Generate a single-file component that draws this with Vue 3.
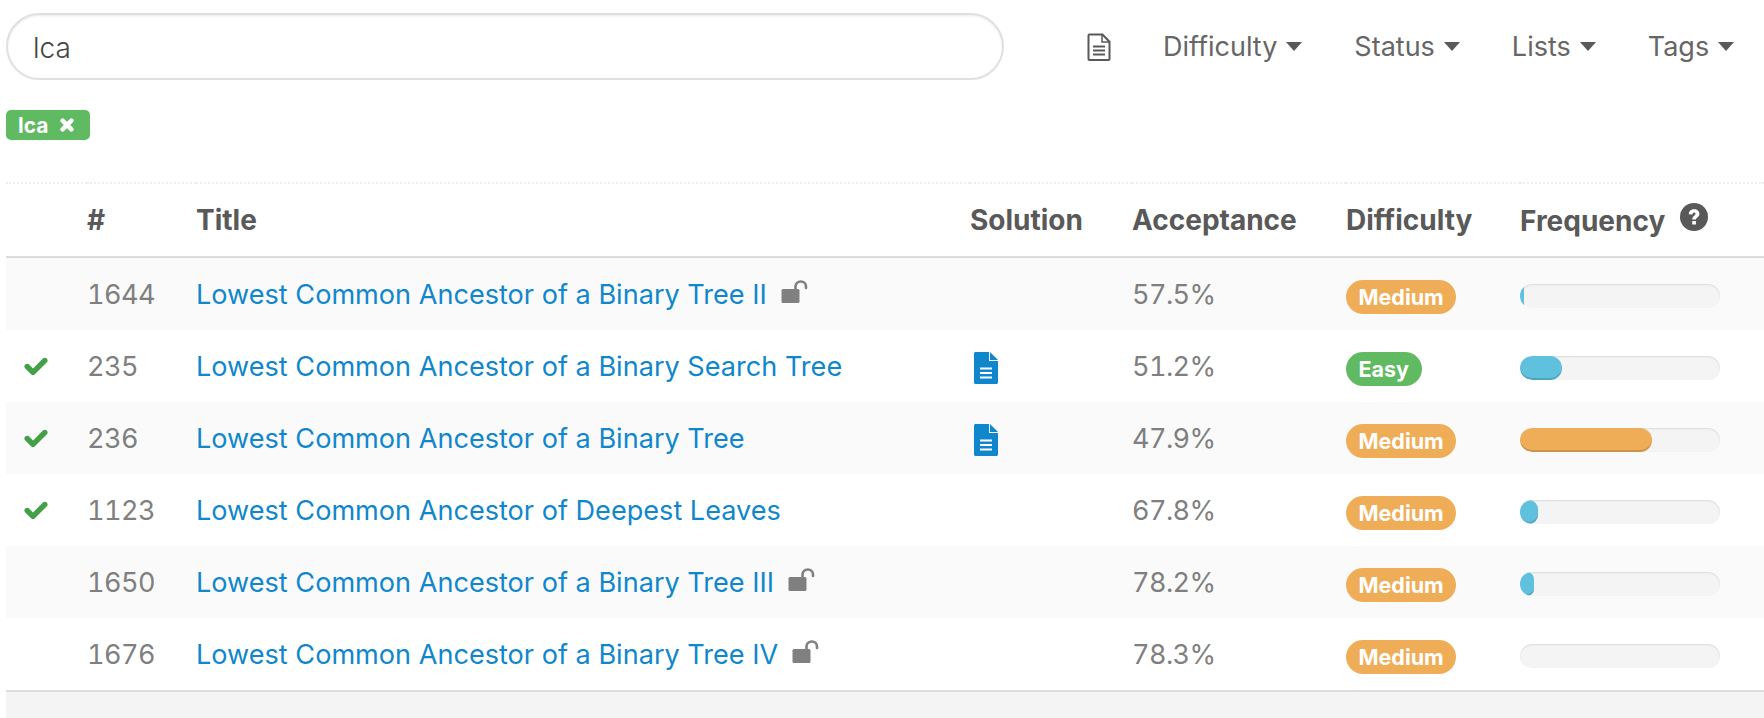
<template>
  <div class="page">
    <div class="toolbar">
      <div class="search">lca</div>
      <div class="filters">
        <svg class="doc-outline" viewBox="0 0 24 28" width="24" height="28">
          <path d="M1.500 2.500c0-.6.4-1 1-1h13l7 7.200v17.300c0 .6-.4 1-1 1h-19c-.6 0-1-.4-1-1z" fill="none" stroke="#595959" stroke-width="2" />
          <path d="M15 1.500v7.500h7.500" fill="none" stroke="#595959" stroke-width="1.500" />
          <path d="M6 13.500h12M6 17.500h12M6 21.500h12" stroke="#595959" stroke-width="2" />
        </svg>
        <div v-for="f in filters" :key="f" class="filter">
          <span>{{ f }}</span>
          <i class="caret"></i>
        </div>
      </div>
    </div>

    <div class="tags">
      <span class="tag">lca
        <svg viewBox="0 0 14 14" width="14" height="14">
          <path d="M2.600 2.600l8.800 8.800M11.400 2.600l-8.800 8.800" stroke="#fff" stroke-width="4.400" stroke-linecap="round" />
        </svg>
      </span>
    </div>

    <table class="questions">
      <thead>
        <tr>
          <th class="col-status"></th>
          <th class="col-id">#</th>
          <th class="col-title">Title</th>
          <th class="col-solution">Solution</th>
          <th class="col-acceptance">Acceptance</th>
          <th class="col-difficulty">Difficulty</th>
          <th class="col-frequency">
            Frequency
            <svg class="help" viewBox="0 0 28 28" width="28" height="28">
              <circle cx="14" cy="14" r="14" fill="#595959" />
              <path d="M8.800 11.200C8.800 8 11.200 6.200 14.200 6.200c2.900 0 5.200 1.800 5.200 4.500 0 3.600-3.400 3.500-3.400 5.800h-3.800c0-3.800 3.300-3.800 3.300-5.600 0-.8-.6-1.300-1.400-1.300-1 0-1.500.7-1.500 1.800z" fill="#fff" />
              <rect x="12.200" y="18" width="3.800" height="3.600" rx=".6" fill="#fff" />
            </svg>
          </th>
        </tr>
      </thead>
      <tbody>
        <tr v-for="q in questions" :key="q.id">
          <td class="col-status">
            <svg v-if="q.solved" viewBox="0 0 24 20" width="24" height="20">
              <path d="M3.200 10.500l5.800 5.800L20.800 4.500" fill="none" stroke="#43a047" stroke-width="5.400" stroke-linejoin="round" stroke-linecap="round" />
            </svg>
          </td>
          <td class="col-id num">{{ q.id }}</td>
          <td class="col-title">
            <a class="link">{{ q.title }}</a>
            <svg v-if="q.locked" class="lock" viewBox="0 0 27 23" width="27" height="23">
              <rect x="0.500" y="9" width="18" height="14" rx="1.500" fill="#808080" />
              <path d="M14.500 9V6.500C14.500 3.500 16.800 1.500 19.800 1.500S25 3.500 25 6.500v1.500" fill="none" stroke="#808080" stroke-width="2.600" stroke-linecap="round" />
            </svg>
          </td>
          <td class="col-solution">
            <svg v-if="q.solution" viewBox="0 0 24 32" width="24" height="32">
              <path d="M1.500 0H15v9h9v21.500c0 .8-.7 1.500-1.500 1.500h-21C.7 32 0 31.300 0 30.500v-29C0 .7.700 0 1.500 0z" fill="#1087cc" />
              <path d="M16 0l8 8h-8z" fill="#1087cc" />
              <path d="M6 15.500h12v2H6zM6 20h12v2H6zM6 24.500h12v2H6z" fill="#fff" />
            </svg>
          </td>
          <td class="col-acceptance num">{{ q.acceptance }}</td>
          <td class="col-difficulty">
            <span class="badge" :class="q.difficulty.toLowerCase()">{{ q.difficulty }}</span>
          </td>
          <td class="col-frequency">
            <div class="bar">
              <div class="fill" :class="q.barClass" :style="{ width: q.frequency + 'px' }"></div>
            </div>
          </td>
        </tr>
      </tbody>
    </table>
    <div class="footer"></div>
  </div>
</template>

<script setup>
const filters = ['Difficulty', 'Status', 'Lists', 'Tags']

const questions = [
  { id: 1644, title: 'Lowest Common Ancestor of a Binary Tree II', locked: true, acceptance: '57.5%', difficulty: 'Medium', frequency: 4, barClass: 'blue' },
  { id: 235, solved: true, title: 'Lowest Common Ancestor of a Binary Search Tree', solution: true, acceptance: '51.2%', difficulty: 'Easy', frequency: 42, barClass: 'blue' },
  { id: 236, solved: true, title: 'Lowest Common Ancestor of a Binary Tree', solution: true, acceptance: '47.9%', difficulty: 'Medium', frequency: 132, barClass: 'orange' },
  { id: 1123, solved: true, title: 'Lowest Common Ancestor of Deepest Leaves', acceptance: '67.8%', difficulty: 'Medium', frequency: 18, barClass: 'blue' },
  { id: 1650, title: 'Lowest Common Ancestor of a Binary Tree III', locked: true, acceptance: '78.2%', difficulty: 'Medium', frequency: 14, barClass: 'blue' },
  { id: 1676, title: 'Lowest Common Ancestor of a Binary Tree IV', locked: true, acceptance: '78.3%', difficulty: 'Medium', frequency: 0, barClass: 'blue' }
]
</script>

<style>
html, body {
  margin: 0;
  background: #fff;
}
</style>

<style scoped>
.page {
  padding: 13px 0 0 6px;
  font-family: Inter, "Liberation Sans", sans-serif;
  height: 705px;
  overflow: hidden;
}

.toolbar {
  display: flex;
  align-items: center;
}

.search {
  box-sizing: border-box;
  width: 998px;
  height: 67px;
  padding-left: 25px;
  border: 2px solid #e0e0e0;
  border-radius: 34px;
  box-shadow: inset 0 1px 2px rgba(0, 0, 0, 0.08);
  font-size: 28px;
  font-weight: 300;
  line-height: 66px;
  color: #444;
}

.filters {
  display: flex;
  align-items: center;
  margin-left: 83px;
  color: #666;
  font-size: 27px;
}

.doc-outline {
  margin-right: 52px;
}

.filter {
  display: flex;
  align-items: center;
  margin-right: 52px;
}

.filter:last-child {
  margin-right: 0;
}

.caret {
  margin-left: 9px;
  border-top: 9px solid #595959;
  border-left: 8px solid transparent;
  border-right: 8px solid transparent;
}

.tags {
  margin-top: 30px;
  height: 72px;
}

.tag {
  display: inline-flex;
  align-items: center;
  gap: 12px;
  box-sizing: border-box;
  height: 30px;
  width: 84px;
  padding-left: 12px;
  background: #60ba62;
  border-radius: 5px;
  color: #fff;
  font-size: 21px;
  font-weight: 700;
}

.questions {
  width: 1758px;
  border-collapse: collapse;
  table-layout: fixed;
  border-top: 2px dotted #eee;
  border-bottom: 2px solid #ddd;
}

th {
  height: 72px;
  padding: 0;
  text-align: left;
  font-size: 28px;
  font-weight: 700;
  color: #595959;
  border-bottom: 2px solid #ddd;
}

td {
  height: 72px;
  padding: 0;
  font-size: 27.1px;
  color: #7f7f7f;
}

.num {
  font-variant-numeric: tabular-nums;
  letter-spacing: -0.6px;
}

tbody tr:nth-child(odd) {
  background: #fafafa;
}

.col-status {
  width: 81px;
  padding-left: 18px;
  box-sizing: border-box;
}

.col-status svg {
  display: block;
}

.col-id {
  width: 109px;
}

.col-title {
  width: 774px;
}

.col-solution {
  width: 162px;
}

.col-solution svg {
  display: block;
  margin-top: 4px;
  margin-left: 4px;
}

.col-acceptance {
  width: 214px;
}

.col-difficulty {
  width: 174px;
}

.link {
  color: #1087cc;
}

.lock {
  margin-left: 14px;
  vertical-align: 1px;
}

.help {
  margin-left: 8px;
  vertical-align: 0;
}

.badge {
  display: inline-block;
  height: 34px;
  margin-top: 6px;
  padding: 0 12.500px;
  border-radius: 17px;
  color: #fff;
  font-size: 21.5px;
  font-weight: 700;
  line-height: 34px;
  vertical-align: middle;
}

.badge.medium {
  background: #f0ad58;
}

.badge.easy {
  background: #60ba62;
}

.bar {
  width: 200px;
  height: 24px;
  margin-top: 4px;
  background: #f4f4f4;
  border-radius: 12px;
  overflow: hidden;
  box-shadow: inset 0 1px 2px rgba(0, 0, 0, 0.1);
}

.fill {
  height: 24px;
  border-radius: 12px;
}

.fill.blue {
  background: #60c1de;
  box-shadow: inset 0 -2px 0 rgba(0, 0, 0, 0.15);
}

.fill.orange {
  background: #f0ad58;
  box-shadow: inset 0 -2px 0 rgba(0, 0, 0, 0.15);
}

.footer {
  height: 40px;
  background: #f4f4f4;
}
</style>
